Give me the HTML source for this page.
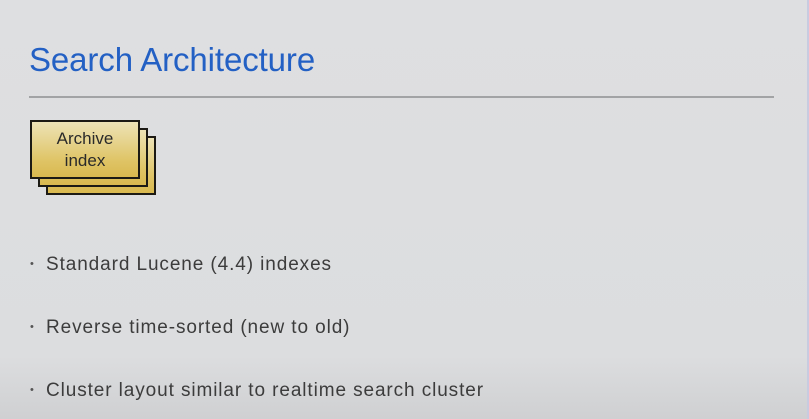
<!DOCTYPE html>
<html><head><style>
body{margin:0;width:809px;height:419px;overflow:hidden;background:linear-gradient(#dedfe1 0%,#dcdddf 85%,#cfd0d2 100%);font-family:"Liberation Sans",sans-serif;position:relative}
.t{position:absolute;left:29px;top:41px;font-size:33px;color:#2360c4;letter-spacing:-0.1px}
.hr{position:absolute;left:29px;top:96px;width:745px;height:2px;background:#a2a3a5}
.b{position:absolute;width:106px;height:55px;border:2px solid #1c1a14;background:linear-gradient(#ede3b6,#dfc466 70%,#d9b94f)}
.f{display:flex;align-items:center;justify-content:center;text-align:center;font-size:17px;line-height:22px;color:#2a2a2a}
.l{position:absolute;left:30px;font-size:19px;letter-spacing:0.9px;color:#3c3c3c}
.l span{display:inline-block;width:16px;font-size:11px;vertical-align:3px;color:#555;letter-spacing:0}
.edge{position:absolute;right:0;top:0;width:2px;height:419px;background:#c8cbe0}
</style></head><body>
<div class="t">Search Architecture</div>
<div class="hr"></div>
<div class="b" style="left:46px;top:136px"></div>
<div class="b" style="left:38px;top:128px"></div>
<div class="b f" style="left:30px;top:120px">Archive<br>index</div>
<div class="l" style="top:254px"><span>•</span>Standard Lucene (4.4) indexes</div>
<div class="l" style="top:317px"><span>•</span>Reverse time-sorted (new to old)</div>
<div class="l" style="top:380px"><span>•</span>Cluster layout similar to realtime search cluster</div>
<div class="edge"></div>
</body></html>
